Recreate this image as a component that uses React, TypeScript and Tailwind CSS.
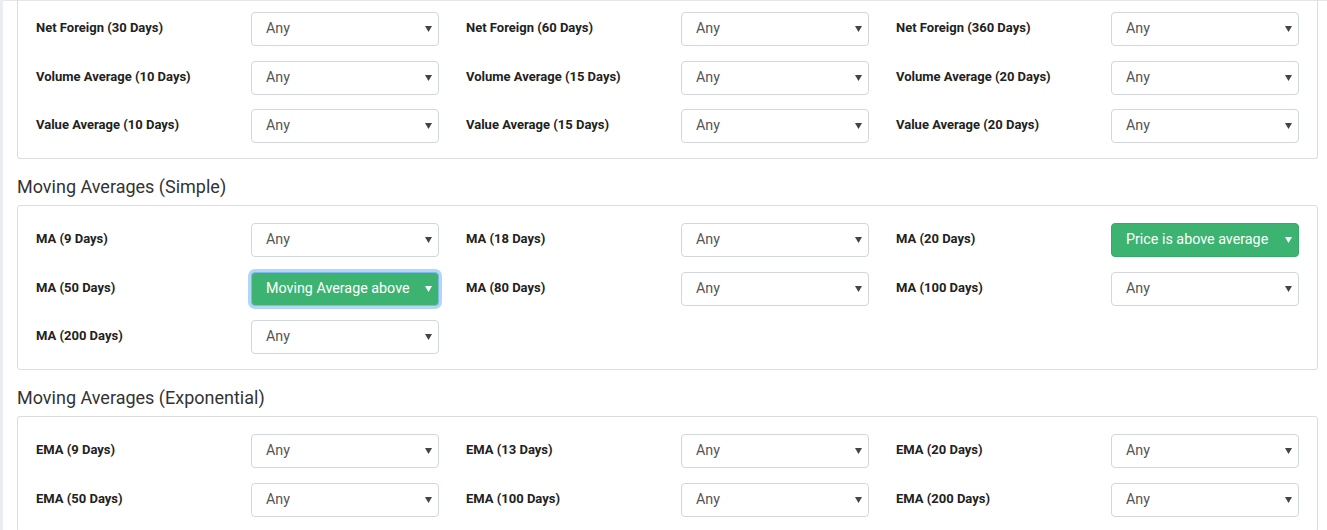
type Field = { label: string; value?: string; active?: boolean; focused?: boolean };

const sections: { title?: string; rows: Field[][] }[] = [
  {
    rows: [
      [{ label: "Net Foreign (30 Days)" }, { label: "Net Foreign (60 Days)" }, { label: "Net Foreign (360 Days)" }],
      [{ label: "Volume Average (10 Days)" }, { label: "Volume Average (15 Days)" }, { label: "Volume Average (20 Days)" }],
      [{ label: "Value Average (10 Days)" }, { label: "Value Average (15 Days)" }, { label: "Value Average (20 Days)" }],
    ],
  },
  {
    title: "Moving Averages (Simple)",
    rows: [
      [{ label: "MA (9 Days)" }, { label: "MA (18 Days)" }, { label: "MA (20 Days)", value: "Price is above average", active: true }],
      [
        { label: "MA (50 Days)", value: "Moving Average above", active: true, focused: true },
        { label: "MA (80 Days)" },
        { label: "MA (100 Days)" },
      ],
      [{ label: "MA (200 Days)" }],
    ],
  },
  {
    title: "Moving Averages (Exponential)",
    rows: [
      [{ label: "EMA (9 Days)" }, { label: "EMA (13 Days)" }, { label: "EMA (20 Days)" }],
      [{ label: "EMA (50 Days)" }, { label: "EMA (100 Days)" }, { label: "EMA (200 Days)" }],
    ],
  },
];

function Caret({ light }: { light?: boolean }) {
  return (
    <svg width="7" height="6" viewBox="0 0 7 6" className="shrink-0">
      <path d="M0 0 H7 L3.5 6 Z" fill={light ? "#ffffff" : "#444444"} />
    </svg>
  );
}

function Select({ field }: { field: Field }) {
  return (
    <div
      className={
        field.active
          ? "w-[188px] h-[34px] shrink-0 rounded-[4px] border bg-[#3cb371] flex items-center justify-between pl-[14px] pr-[6px] text-white text-[14.3px]" +
            (field.focused ? " border-[#7fb8ec] shadow-[0_0_0_3px_rgba(130,185,240,0.6)]" : " border-[#35ab67]")
          : "w-[188px] h-[34px] shrink-0 rounded-[4px] border border-[#d2d6de] bg-white flex items-center justify-between pl-[14px] pr-[6px] text-[#555] text-[14.3px]"
      }
    >
      <span>{field.value ?? "Any"}</span>
      <Caret light={field.active} />
    </div>
  );
}

export default function App() {
  return (
    <div
      className="w-[1327px] h-[530px] overflow-hidden bg-white flex"
      style={{ fontFamily: "Roboto, 'Liberation Sans', sans-serif" }}
    >
      <div className="w-[3px] shrink-0 bg-[#e9ecf1]" />
      <div className="flex-1 min-w-0 border-t border-[#e6e6e6] pl-[14px] pr-[9px]">
        {sections.map((section, si) => (
          <div key={si}>
            {section.title && (
              <h3 className="mt-[18px] mb-[8.5px] text-[18px] leading-[20px] text-[#333] font-normal">
                {section.title}
              </h3>
            )}
            <div
              className={
                "border border-[#dcdcdc] rounded-[3px] px-[18px] pt-[17px]" +
                (si === 0 ? " -mt-[6px] border-t-0 rounded-t-none" : "")
              }
            >
              {section.rows.map((row, ri) => (
                <div key={ri} className="grid grid-cols-[430px_430px_1fr] mb-[14.5px]">
                  {row.map((field, fi) => (
                    <div key={fi} className="flex items-center">
                      <div className="w-[215px] shrink-0 -mt-[2px] text-[13px] font-bold text-[#222]">{field.label}</div>
                      <Select field={field} />
                    </div>
                  ))}
                </div>
              ))}
            </div>
          </div>
        ))}
      </div>
    </div>
  );
}
